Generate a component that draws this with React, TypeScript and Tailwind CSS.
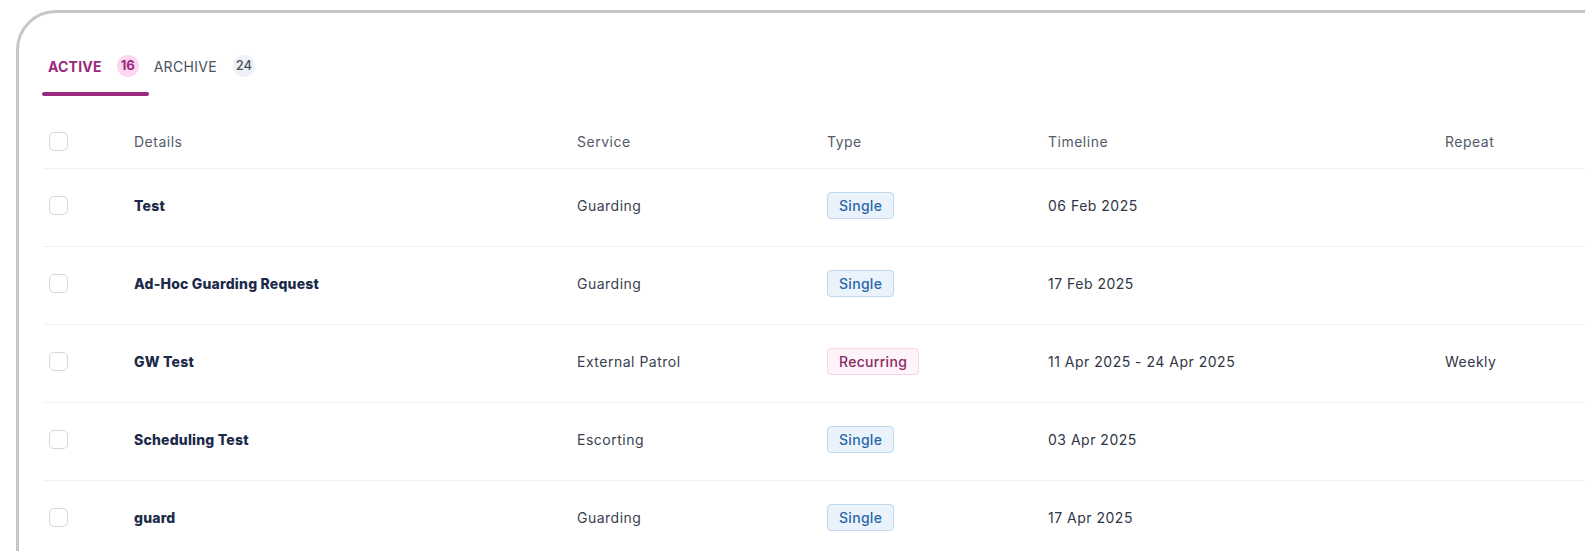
const rows = [
  { name: "Test", service: "Guarding", type: "Single", timeline: "06 Feb 2025", repeat: "" },
  { name: "Ad-Hoc Guarding Request", service: "Guarding", type: "Single", timeline: "17 Feb 2025", repeat: "" },
  { name: "GW Test", service: "External Patrol", type: "Recurring", timeline: "11 Apr 2025 - 24 Apr 2025", repeat: "Weekly" },
  { name: "Scheduling Test", service: "Escorting", type: "Single", timeline: "03 Apr 2025", repeat: "" },
  { name: "guard", service: "Guarding", type: "Single", timeline: "17 Apr 2025", repeat: "" },
];

const cols = "grid grid-cols-[91px_443px_250px_221px_397px_1fr] items-center";

function Checkbox() {
  return <div className="w-[19px] h-[19px] rounded-[5px] border-[1.5px] border-[#d3d8e0] bg-white ml-[6px]" />;
}

function TypeBadge({ type }: { type: string }) {
  if (type === "Recurring") {
    return (
      <span className="inline-flex items-center h-[27px] px-[11px] rounded-[4px] border border-[#fad3e8] bg-[#fdf3f9] text-[14px] font-medium tracking-[0.3px] text-[#8a2a62]">
        {type}
      </span>
    );
  }
  return (
    <span className="inline-flex items-center h-[27px] px-[11px] rounded-[4px] border border-[#bfd8f1] bg-[#eaf3fc] text-[14px] font-medium tracking-[0.3px] text-[#2a67a8]">
      {type}
    </span>
  );
}

export default function App() {
  return (
    <div className="w-[1585px] h-[551px] overflow-hidden bg-white font-['Inter',sans-serif]">
      <div className="ml-[16px] mt-[10px] w-[1700px] h-[700px] border-[3px] border-[#c6c6c6] rounded-tl-[40px] bg-white pl-[24px] pt-[42px]">
        {/* Tabs */}
        <div className="flex items-end">
          <div className="flex flex-col">
            <div className="flex items-center gap-[15px] pl-[5px] pr-[10px] pb-[15px]">
              <span className="text-[14px] font-bold text-[#9a2a7d] tracking-[0.2px]">ACTIVE</span>
              <span className="w-[22px] h-[22px] rounded-full bg-[#fbd6ef] text-[13px] font-bold text-[#9a2a7d] flex items-center justify-center">
                16
              </span>
            </div>
            <div className="h-[4px] -ml-[1px] rounded-full bg-[#9a2a7d]" />
          </div>
          <div className="flex items-center gap-[16px] pl-[5px] pr-[10px] pb-[19px]">
            <span className="text-[14px] text-[#4b5260] tracking-[0.3px]">ARCHIVE</span>
            <span className="w-[22px] h-[22px] rounded-full bg-[#eef1f8] text-[13px] font-medium text-[#4b5260] flex items-center justify-center">
              24
            </span>
          </div>
        </div>

        {/* Table */}
        <div className="mt-[20px] tracking-[0.5px]">
          <div className={`${cols} h-[52px] pb-[2px] text-[14px] text-[#545b68]`}>
            <Checkbox />
            <span>Details</span>
            <span>Service</span>
            <span>Type</span>
            <span>Timeline</span>
            <span>Repeat</span>
          </div>
          {rows.map((r) => (
            <div key={r.name} className={`${cols} h-[78px] pb-[5px] border-t border-[#f0f1f3] text-[14px] text-[#3a4150]`}>
              <Checkbox />
              <span className="font-extrabold tracking-[0.2px] text-[#1b2a48]">{r.name}</span>
              <span>{r.service}</span>
              <span>
                <TypeBadge type={r.type} />
              </span>
              <span className="text-[#2f3645]">{r.timeline}</span>
              <span className="text-[#2f3645]">{r.repeat}</span>
            </div>
          ))}
        </div>
      </div>
    </div>
  );
}
